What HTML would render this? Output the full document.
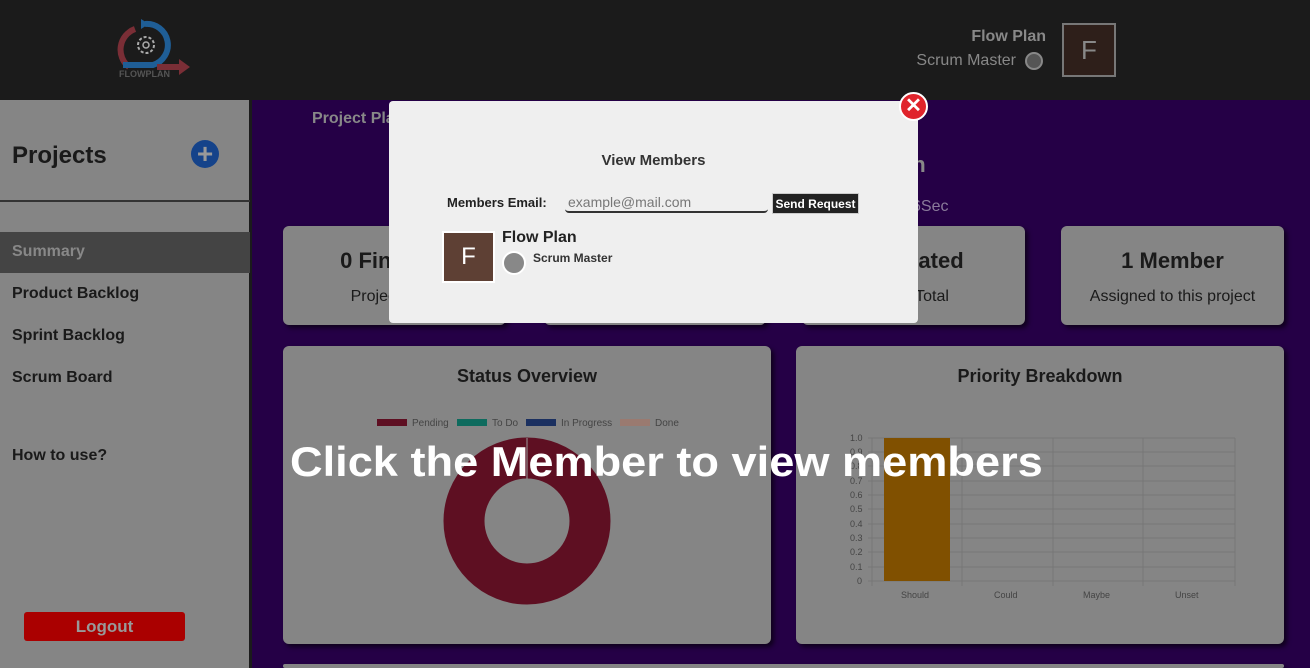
<!DOCTYPE html>
<html><head><style>
*{margin:0;padding:0;box-sizing:border-box}
html,body{width:1310px;height:668px;overflow:hidden}
body{position:relative;background:#250046;font-family:"Liberation Sans",sans-serif;color:#1a1a1a}
.abs{position:absolute}
.card{position:absolute;background:#858585;border-radius:6px;box-shadow:3px 3px 5px rgba(0,0,0,.6);text-align:center}
.side a{position:absolute;left:12px;font-size:16px;font-weight:bold;color:#1a1a1a}
</style></head><body>
<div class="abs" style="left:0;top:0;width:1310px;height:100px;background:#1b1b1b"></div>
<svg class="abs" style="left:115px;top:15px" width="80" height="65" viewBox="0 0 80 65">
<path d="M14 52 A22 22 0 0 1 20 14" stroke="#7a2e36" stroke-width="6" fill="none"/>
<path d="M30 9 A21 21 0 0 1 38 50 L8 50" stroke="#1f5e96" stroke-width="6" fill="none"/>
<path d="M26 4 L34 9 L26 14 Z" fill="#1f5e96"/>
<path d="M42 52 L66 52" stroke="#7a2e36" stroke-width="6"/><path d="M64 44 L75 52 L64 60Z" fill="#7a2e36"/>
<circle cx="31" cy="30" r="8" stroke="#aaa" stroke-width="2" fill="none" stroke-dasharray="3 2"/><circle cx="31" cy="30" r="3" stroke="#aaa" stroke-width="1.5" fill="none"/>
<text x="4" y="62" font-size="9" font-weight="bold" fill="#555" font-family="Liberation Sans">FLOWPLAN</text>
</svg>
<div class="abs" style="right:264px;top:28px;font-size:16px;font-weight:bold;color:#888">Flow Plan</div>
<div class="abs" style="right:294px;top:52px;font-size:16px;color:#888">Scrum Master</div>
<div class="abs" style="left:1025px;top:52px;width:18px;height:18px;border-radius:50%;background:#555;border:2px solid #888"></div>
<div class="abs" style="left:1062px;top:23px;width:54px;height:54px;background:#2e1f1a;border:2px solid #777;color:#888;font-size:26px;text-align:center;line-height:50px">F</div>

<div class="abs side" style="left:0;top:100px;width:252px;height:568px;background:#858585;border-right:3px solid #1b1b1b">
<div class="abs" style="left:12px;top:42px;font-size:24px;font-weight:bold">Projects</div>
<div class="abs" style="left:191px;top:40px;width:28px;height:28px;border-radius:50%;background:#15438a;color:#999;font-size:28px;font-weight:bold;text-align:center;line-height:28px">+</div>
<div class="abs" style="left:0;top:100px;width:250px;height:2px;background:#333"></div>
<div class="abs" style="left:0;top:132px;width:250px;height:41px;background:#444"></div>
<a style="top:143px;color:#888">Summary</a>
<a style="top:185px">Product Backlog</a>
<a style="top:227px">Sprint Backlog</a>
<a style="top:269px">Scrum Board</a>
<a style="top:347px">How to use?</a>
<div class="abs" style="left:24px;top:512px;width:161px;height:29px;background:#a00;border-radius:3px;color:#999;font-weight:bold;font-size:17px;text-align:center;line-height:29px">Logout</div>
</div>

<div class="abs" style="left:312px;top:110px;font-size:16px;font-weight:bold;color:#888">Project Plan</div>
<div class="abs" style="left:900px;top:152px;font-size:22px;font-weight:bold;color:#888">an</div>
<div class="abs" style="left:912px;top:198px;font-size:16px;color:#8a7a9a">6Sec</div>

<div class="card" style="left:283px;top:226px;width:223px;height:99px"><div style="margin-top:22px;font-size:22px;font-weight:bold">0 Finished</div><div style="margin-top:14px;font-size:16px">Project Total</div></div>
<div class="card" style="left:544px;top:226px;width:222px;height:99px"></div>
<div class="card" style="left:802px;top:226px;width:223px;height:99px"><div style="margin-top:22px;font-size:22px;font-weight:bold">0 Created</div><div style="margin-top:14px;font-size:16px">Task Total</div></div>
<div class="card" style="left:1061px;top:226px;width:223px;height:99px"><div style="margin-top:22px;font-size:22px;font-weight:bold">1 Member</div><div style="margin-top:14px;font-size:16px">Assigned to this project</div></div>

<div class="card" style="left:283px;top:346px;width:488px;height:298px">
<div style="margin-top:20px;font-size:18px;font-weight:bold">Status Overview</div>
<svg class="abs" style="left:0;top:0" width="488" height="298">
<rect x="94" y="73" width="30" height="7" fill="#5e0f22"/><text x="129" y="80" font-size="10" fill="#444">Pending</text>
<rect x="174" y="73" width="30" height="7" fill="#0e6b5e"/><text x="209" y="80" font-size="10" fill="#444">To Do</text>
<rect x="243" y="73" width="30" height="7" fill="#1b3060"/><text x="278" y="80" font-size="10" fill="#444">In Progress</text>
<rect x="337" y="73" width="30" height="7" fill="#9a7a70"/><text x="372" y="80" font-size="10" fill="#444">Done</text>
<circle cx="244" cy="175" r="63" fill="none" stroke="#5e0f22" stroke-width="41"/>
<line x1="244" y1="92" x2="244" y2="133" stroke="#999" stroke-width="1"/>
</svg></div>

<div class="card" style="left:796px;top:346px;width:488px;height:298px">
<div style="margin-top:20px;font-size:18px;font-weight:bold">Priority Breakdown</div>
<svg class="abs" style="left:0;top:0" width="488" height="298" font-size="9" fill="#444">
<g stroke="#777" stroke-width="1">
<line x1="72" y1="92" x2="439" y2="92"/><line x1="72" y1="106" x2="439" y2="106"/><line x1="72" y1="120" x2="439" y2="120"/><line x1="72" y1="135" x2="439" y2="135"/><line x1="72" y1="149" x2="439" y2="149"/><line x1="72" y1="163" x2="439" y2="163"/><line x1="72" y1="178" x2="439" y2="178"/><line x1="72" y1="192" x2="439" y2="192"/><line x1="72" y1="206" x2="439" y2="206"/><line x1="72" y1="221" x2="439" y2="221"/><line x1="72" y1="235" x2="439" y2="235"/>
<line x1="76" y1="92" x2="76" y2="240"/><line x1="166" y1="92" x2="166" y2="240"/><line x1="257" y1="92" x2="257" y2="240"/><line x1="347" y1="92" x2="347" y2="240"/><line x1="439" y1="92" x2="439" y2="240"/></g>
<rect x="88" y="92" width="66" height="143" fill="#805000"/>
<text x="54" y="95">1.0</text><text x="54" y="109">0.9</text><text x="54" y="123">0.8</text><text x="54" y="138">0.7</text><text x="54" y="152">0.6</text><text x="54" y="166">0.5</text><text x="54" y="181">0.4</text><text x="54" y="195">0.3</text><text x="54" y="209">0.2</text><text x="54" y="224">0.1</text><text x="61" y="238">0</text>
<text x="105" y="252">Should</text><text x="198" y="252">Could</text><text x="287" y="252">Maybe</text><text x="379" y="252">Unset</text>
</svg></div>

<div class="card" style="left:283px;top:664px;width:1001px;height:4px"></div>

<div class="abs" style="left:290px;top:438px;font-size:42px;font-weight:bold;color:#fff;white-space:nowrap;transform:scaleX(1.075);transform-origin:0 0">Click the Member to view members</div>

<div class="abs" style="left:389px;top:101px;width:529px;height:222px;background:#efefef;border-radius:4px">
<div class="abs" style="left:0;width:529px;top:51px;text-align:center;font-size:15px;font-weight:bold;color:#333">View Members</div>
<div class="abs" style="left:58px;top:94px;font-size:13px;font-weight:bold;color:#222">Members Email:</div>
<div class="abs" style="left:176px;top:91px;width:203px;height:21px;border-bottom:2px solid #333;border-radius:0 0 4px 4px;font-size:14px;color:#777;padding-left:3px;line-height:20px">example@mail.com</div>
<div class="abs" style="left:383px;top:92px;width:87px;height:21px;background:#222;color:#fff;font-size:12px;font-weight:bold;text-align:center;line-height:21px;border:1px solid #ccc">Send Request</div>
<div class="abs" style="left:53px;top:130px;width:53px;height:52px;background:#5e4034;border:2px solid #fff;color:#fff;font-size:24px;text-align:center;line-height:48px">F</div>
<div class="abs" style="left:113px;top:128px;font-size:16px;font-weight:bold;color:#222">Flow Plan</div>
<div class="abs" style="left:113px;top:150px;width:24px;height:24px;border-radius:50%;background:#888;border:2px solid #fff"></div>
<div class="abs" style="left:144px;top:150px;font-size:12px;font-weight:bold;color:#333">Scrum Master</div>
</div>
<div class="abs" style="left:899px;top:92px;width:29px;height:29px;border-radius:50%;background:#e0242c;border:2px solid #fff;color:#fff;font-size:20px;font-weight:bold;text-align:center;line-height:24px">✕</div>
</body></html>
